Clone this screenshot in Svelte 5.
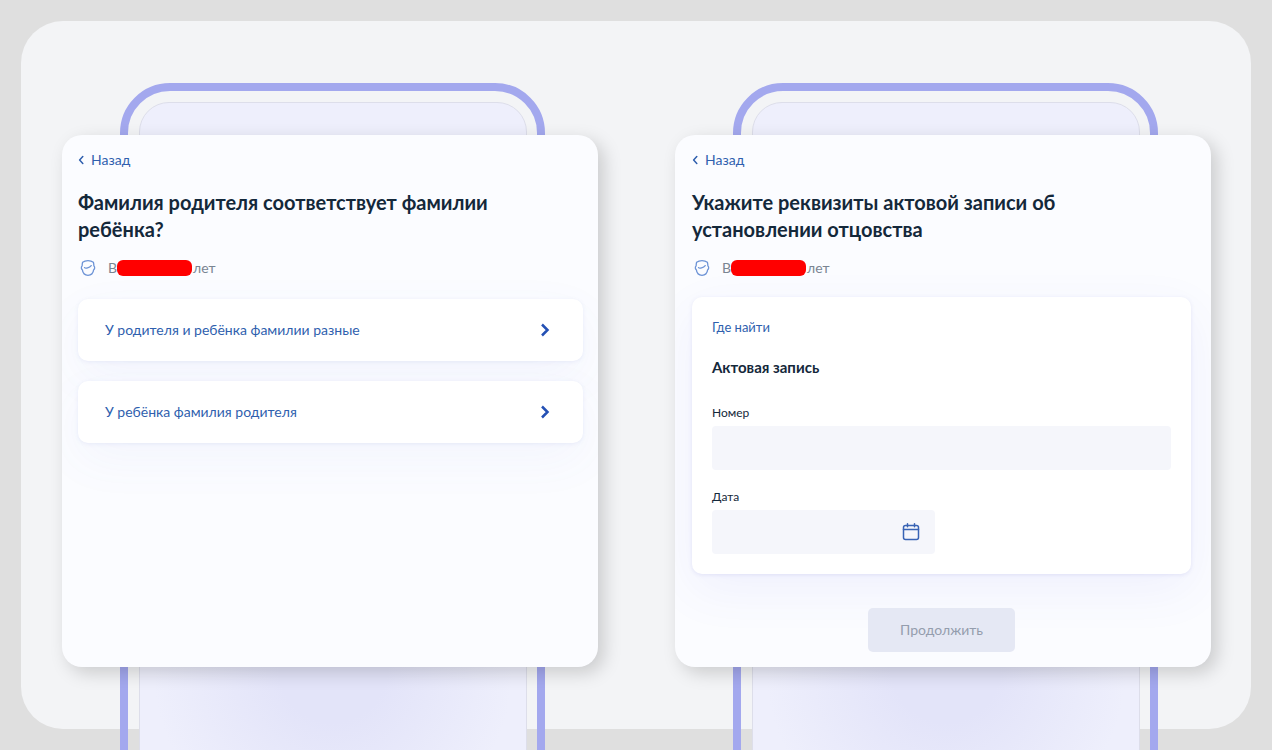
<script>
	const options = ['У родителя и ребёнка фамилии разные', 'У ребёнка фамилия родителя'];

	let number = $state('');
	let date = $state('');

	const ready = $derived(number.trim() !== '' && date.trim() !== '');
</script>

{#snippet back()}
	<a class="back" href="#back">
		<svg width="6" height="10" viewBox="0 0 6 10" aria-hidden="true">
			<path d="M4.8 1.6 1.6 5l3.2 3.4" />
		</svg>
		Назад
	</a>
{/snippet}

{#snippet child()}
	<p class="child">
		<svg width="20" height="20" viewBox="0 0 20 20" aria-hidden="true">
			<path
				d="M4.600 4.200C7.500 2 12.500 2 15.400 4.200c.4 1.400.4 2.600.5 3.800 1.100.700 1 3-.2 3.700-.5 3.400-2.700 5.700-5.700 5.700s-5.200-2.300-5.700-5.700C3.100 11 3 8.700 4.100 8c.1-1.200.1-2.400.5-3.800Z"
			/>
			<path d="M6.500 9.600c.9 1 1.900.6 3.100.2 1.300-.4 2.500-.900 3.600-2.200" />
		</svg>
		<span class="child-text">В<span class="redacted"></span>лет</span>
	</p>
{/snippet}

<div class="page">
	<main class="board">
		<section class="step">
			<div class="phone" aria-hidden="true"><div class="screen"></div></div>
			<div class="sheet">
				{@render back()}
				<h1>Фамилия родителя соответствует фамилии ребёнка?</h1>
				{@render child()}
				<div class="options">
					{#each options as option}
						<button class="option" type="button">
							{option}
							<svg width="10" height="16" viewBox="0 0 10 16" aria-hidden="true">
								<path d="m2 2.500 5.500 5.500L2 13.500" />
							</svg>
						</button>
					{/each}
				</div>
			</div>
		</section>

		<section class="step">
			<div class="phone" aria-hidden="true"><div class="screen"></div></div>
			<form class="sheet" onsubmit={(e) => e.preventDefault()}>
				{@render back()}
				<h1>Укажите реквизиты актовой записи об установлении отцовства</h1>
				{@render child()}
				<div class="record">
					<a class="hint" href="#where">Где найти</a>
					<h2>Актовая запись</h2>
					<label for="number">Номер</label>
					<div class="field">
						<input id="number" type="text" bind:value={number} />
					</div>
					<label for="date">Дата</label>
					<div class="field date">
						<input id="date" type="text" bind:value={date} />
						<button class="calendar" type="button" aria-label="Открыть календарь">
							<svg width="18" height="18" viewBox="0 0 18 18" aria-hidden="true">
								<rect x="1.500" y="2.500" width="15" height="14" rx="2" />
								<path d="M1.500 6.500h15M5.500.800v3M12.500.800v3" />
							</svg>
						</button>
					</div>
				</div>
				<button class="submit" type="submit" disabled={!ready}>Продолжить</button>
			</form>
		</section>
	</main>
</div>

<style>
	:global(body) {
		margin: 0;
		background: #dfdfdf;
	}

	.page {
		--link: #2f5fae;
		--ink: #14283a;

		box-sizing: border-box;
		min-height: 100vh;
		padding: 21px;
		overflow: hidden;
		font-family: Lato, 'Liberation Sans', sans-serif;
		font-size: 14px;
		line-height: 20px;
		color: var(--ink);
	}

	.board {
		display: grid;
		grid-template-columns: repeat(2, minmax(0, 1fr));
		gap: 77px;
		padding: 114px 40px 62px 41px;
		border-radius: 42px;
		background: #f3f4f6;
	}

	.step {
		position: relative;
		display: flex;
	}

	/* The phone stands behind the sheet and runs off the bottom of the page. */
	.phone {
		position: absolute;
		inset: -52px 53px -200px 58px;
		box-sizing: border-box;
		padding: 11px 10px 11px 11px;
		border: 8px solid #a3a8ee;
		border-radius: 50px;
	}

	.screen {
		box-sizing: border-box;
		height: 100%;
		border: 1px solid #dddeea;
		border-radius: 30px;
		background:
			radial-gradient(circle 180px at 50% 76%, #e3e4f9 30%, transparent),
			#eeeffc;
	}

	.sheet {
		position: relative;
		display: flex;
		flex: 1;
		flex-direction: column;
		align-items: flex-start;
		box-sizing: border-box;
		min-width: 0;
		padding: 15px 15px 15px 16px;
		border-radius: 20px;
		background: #fbfcff;
		box-shadow: 6px 6px 18px rgb(0 0 0 / 0.17);
		overflow: hidden;
	}

	form.sheet {
		padding-right: 20px;
		padding-left: 17px;
	}

	a {
		color: var(--link);
		text-decoration: none;
	}

	svg {
		flex: none;
		fill: none;
		stroke: currentColor;
		stroke-linecap: round;
		stroke-linejoin: round;
	}

	.back {
		display: flex;
		align-items: center;
		gap: 7px;
	}

	.back svg {
		stroke-width: 1.500;
	}

	h1 {
		max-width: 440px;
		margin: 19px 0 15px;
		font-size: 20px;
		font-weight: 700;
		line-height: 27px;
	}

	.child {
		display: flex;
		align-items: center;
		gap: 10px;
		margin: 0 0 19px;
		color: #7a8592;
	}

	.child svg {
		color: #6c93d6;
		stroke-width: 1.300;
	}

	.child-text {
		display: flex;
		align-items: center;
	}

	.redacted {
		width: 75px;
		height: 16px;
		margin-right: 1px;
		border-radius: 6px;
		background: #f00;
	}

	.options {
		display: flex;
		flex-direction: column;
		align-self: stretch;
		gap: 20px;
		margin-top: 2px;
	}

	button,
	input {
		border: 0;
		font: inherit;
	}

	.option {
		display: flex;
		align-items: center;
		justify-content: space-between;
		padding: 21px 33px 21px 27px;
		border-radius: 10px;
		background: #fff;
		box-shadow:
			0 1px 4px rgb(90 110 200 / 0.1),
			0 16px 50px rgb(90 110 220 / 0.05);
		color: var(--link);
		text-align: left;
	}

	.option svg {
		color: #2450b4;
		stroke-linecap: butt;
		stroke-linejoin: miter;
		stroke-width: 2.500;
	}

	.record {
		display: flex;
		flex-direction: column;
		align-items: flex-start;
		align-self: stretch;
		padding: 20px;
		border-radius: 10px;
		background: #fff;
		box-shadow:
			0 1px 4px rgb(90 90 200 / 0.12),
			0 16px 50px rgb(90 90 220 / 0.07);
	}

	.hint {
		font-size: 13px;
	}

	h2 {
		margin: 20px 0 26px;
		font-size: 15px;
		font-weight: 700;
		line-height: 20px;
	}

	label {
		font-size: 12px;
	}

	.field {
		display: flex;
		align-items: center;
		align-self: stretch;
		height: 44px;
		margin: 3px 0 17px;
		border-radius: 4px;
		background: #f5f6fb;
	}

	.date {
		width: 223px;
		align-self: flex-start;
		margin-bottom: 0;
	}

	input {
		flex: 1;
		align-self: stretch;
		min-width: 0;
		padding: 0 12px;
		background: none;
		color: inherit;
	}

	.calendar {
		display: flex;
		margin-right: 15px;
		padding: 0;
		background: none;
		color: #3863b5;
	}

	.calendar svg {
		stroke-width: 1.500;
	}

	.submit {
		align-self: center;
		margin-top: 34px;
		padding: 12px 32px;
		border-radius: 5px;
		background: var(--link);
		color: #fff;
	}

	.submit:disabled {
		background: #e5e8f4;
		color: #949dad;
	}
</style>
